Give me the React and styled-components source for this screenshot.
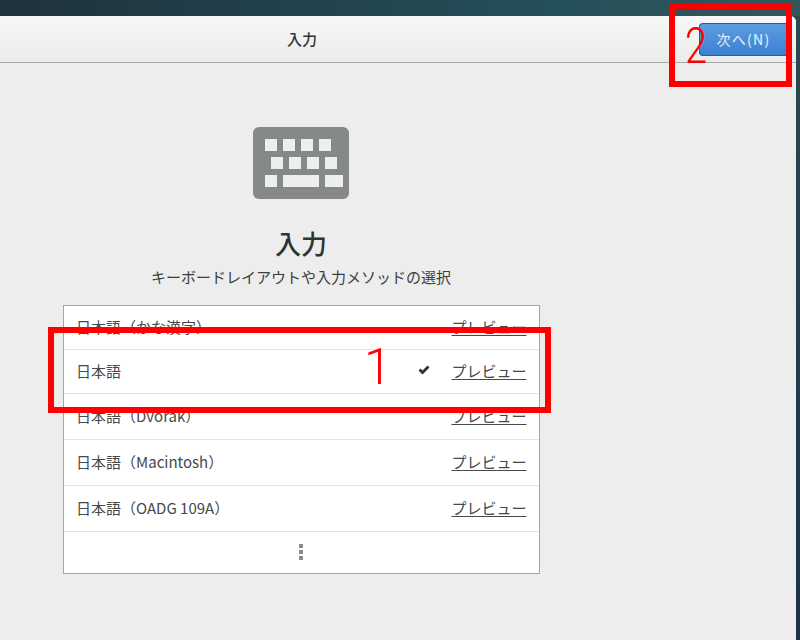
import React from "react";
import styled, { createGlobalStyle } from "styled-components";

const GlobalStyle = createGlobalStyle`
  html, body {
    margin: 0;
    padding: 0;
    background: #ededed;
  }
  body {
    font-family: "Noto Sans CJK JP", "Noto Sans", sans-serif;
    color: #2e3436;
  }
`;

const Screen = styled.div`
  position: relative;
  width: 800px;
  height: 640px;
  overflow: hidden;
  display: flex;
  flex-direction: column;
  background:
    linear-gradient(90deg, #1f323c 0%, #24505a 70%, #35565a 100%) top / 100% 16px no-repeat,
    linear-gradient(#2c4a52, #1c3147);
`;

const Window = styled.div`
  margin-top: 16px;
  width: 796px;
  flex: 1;
  display: flex;
  flex-direction: column;
  background: #ededed;
  border-top-right-radius: 6px;
`;

const Header = styled.header`
  height: 46px;
  flex: none;
  box-sizing: content-box;
  display: flex;
  align-items: center;
  justify-content: center;
  padding-right: 192px;
  border-bottom: 1px solid #a9a9a9;
  border-top-right-radius: 6px;
  background: linear-gradient(#f8f8f8, #ebebeb);
  position: relative;
`;

const HeaderTitle = styled.div`
  font-size: 15px;
  font-weight: 500;
  color: #2e3436;
  margin-top: -1px;
`;

const NextButton = styled.button`
  position: absolute;
  top: 7px;
  left: 699px;
  width: 88px;
  height: 33px;
  padding: 0 0 1px;
  border: 1px solid #1b5fa8;
  border-right: none;
  border-radius: 4px 0 0 4px;
  background: linear-gradient(#5d9ddf, #3a81d3);
  color: #eaf2fb;
  font-family: inherit;
  font-size: 14px;
  letter-spacing: 1.3px;
`;

const Content = styled.main`
  width: 602px;
  display: flex;
  flex-direction: column;
  align-items: center;
  padding-top: 64px;
`;

const KeyboardIcon = styled.svg`
  display: block;
  width: 96px;
  height: 72px;
`;

const Title = styled.h1`
  margin: 26px 0 0;
  font-size: 26px;
  line-height: 36px;
  font-weight: 500;
  color: #2e3436;
`;

const Subtitle = styled.p`
  margin: 6px 0 0;
  font-size: 15px;
  line-height: 20px;
  color: #3a3f41;
`;

const List = styled.section`
  margin: 18px 0 0;
  width: 477px;
  box-sizing: border-box;
  background: #fff;
  border: 1px solid #a5a5a5;
`;

const Row = styled.div`
  height: ${(p) => p.$height}px;
  box-sizing: border-box;
  display: flex;
  align-items: center;
  padding: 0 12px 3px 12.5px;
  border-bottom: 1px solid #e4e4e4;
  font-size: 15px;
  color: #45494b;
`;

const RowName = styled.span`
  flex: 1;
`;

const Check = styled.svg`
  width: 12px;
  height: 10px;
  margin-right: 21px;
`;

const Preview = styled.a`
  color: #45494b;
  text-decoration: underline;
  text-underline-offset: 2px;
`;

const MoreRow = styled.div`
  height: 41px;
  display: flex;
  flex-direction: column;
  align-items: center;
  justify-content: center;
  gap: 2px;
  padding-bottom: 1px;
  box-sizing: border-box;
`;

const Dot = styled.span`
  width: 4px;
  height: 4px;
  background: #888b8b;
`;

const RedBox = styled.div`
  position: absolute;
  box-sizing: border-box;
  left: ${(p) => p.$x}px;
  top: ${(p) => p.$y}px;
  width: ${(p) => p.$w}px;
  height: ${(p) => p.$h}px;
  border: 6px solid #fe0000;
`;

const RedNumber = styled.div`
  position: absolute;
  left: ${(p) => p.$x}px;
  top: ${(p) => p.$y}px;
  font-family: Roboto, sans-serif;
  font-weight: 300;
  font-size: 50px;
  line-height: 50px;
  color: #fe0000;
  transform-origin: left top;
  transform: scaleX(${(p) => p.$squeeze || 1});
`;

const keys = [
  [12, 12, 12], [30, 12, 12], [48, 12, 12], [66, 12, 12],
  [18, 30, 12], [36, 30, 12], [54, 30, 12], [72, 30, 12],
  [12, 48, 12], [30, 48, 36], [72, 48, 18],
];

const layouts = [
  { name: "日本語（かな漢字）", height: 44 },
  { name: "日本語", height: 44, active: true },
  { name: "日本語（Dvorak）", height: 46 },
  { name: "日本語（Macintosh）", height: 46 },
  { name: "日本語（OADG 109A）", height: 46 },
];

export default function App() {
  return (
    <Screen>
      <GlobalStyle />
      <Window>
        <Header>
          <HeaderTitle>入力</HeaderTitle>
          <NextButton>次へ(N)</NextButton>
        </Header>
        <Content>
          <KeyboardIcon viewBox="0 0 96 72">
            <rect width="96" height="72" rx="6" fill="#858989" />
            {keys.map(([x, y, w]) => (
              <rect key={`${x}-${y}`} x={x} y={y} width={w} height="12" fill="#eeeeee" />
            ))}
          </KeyboardIcon>
          <Title>入力</Title>
          <Subtitle>キーボードレイアウトや入力メソッドの選択</Subtitle>
          <List>
            {layouts.map((l) => (
              <Row key={l.name} $height={l.height}>
                <RowName>{l.name}</RowName>
                {l.active && (
                  <Check viewBox="0 0 12 10">
                    <path d="M0.5 5.5 L2.5 3.5 L4.5 5.5 L9.5 0.5 L11.5 2.5 L4.5 9.5 Z" fill="#2e3436" />
                  </Check>
                )}
                <Preview>プレビュー</Preview>
              </Row>
            ))}
            <MoreRow>
              <Dot />
              <Dot />
              <Dot />
            </MoreRow>
          </List>
        </Content>
      </Window>
      <RedBox $x={48} $y={327} $w={503} $h={86} />
      <RedBox $x={669} $y={3} $w={123} $h={84} />
      <RedNumber $x={364} $y={342}>1</RedNumber>
      <RedNumber $x={685} $y={21} $squeeze={0.8}>2</RedNumber>
    </Screen>
  );
}
